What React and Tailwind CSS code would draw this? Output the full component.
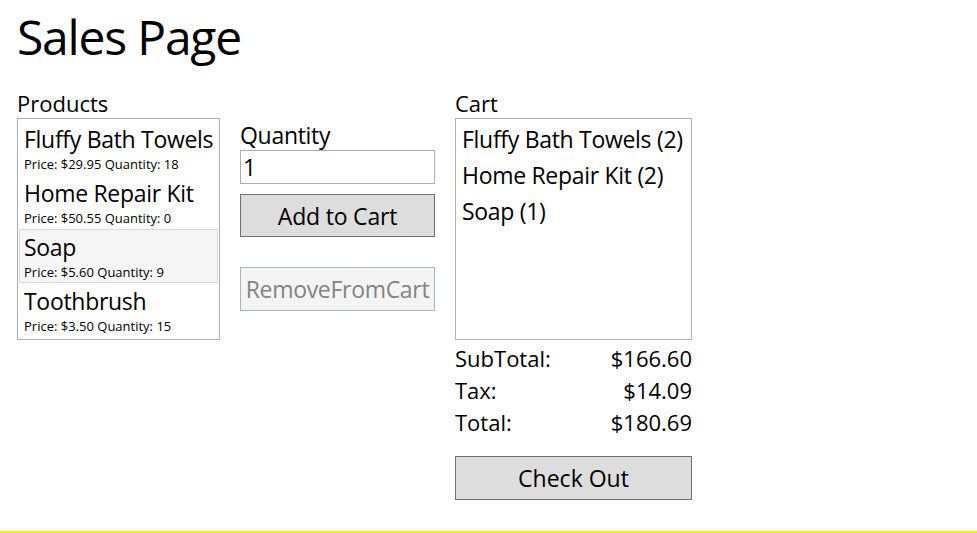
const products = [
    { name: 'Fluffy Bath Towels', price: '$29.95', qty: 18 },
    { name: 'Home Repair Kit', price: '$50.55', qty: 0 },
    { name: 'Soap', price: '$5.60', qty: 9, selected: true },
    { name: 'Toothbrush', price: '$3.50', qty: 15 },
];

const cart = ['Fluffy Bath Towels (2)', 'Home Repair Kit (2)', 'Soap (1)'];

const totals = [
    ['SubTotal:', '$166.60'],
    ['Tax:', '$14.09'],
    ['Total:', '$180.69'],
];

export default function App() {
    return (
        <div
            className="h-[533px] w-full bg-white text-black border-b-2 border-[#fff200] overflow-hidden"
            style={{ fontFamily: '"Segoe UI", "Open Sans", sans-serif' }}
        >
            <div className="pl-[17px] pt-[5px]">
                <h1 className="text-[48px] leading-[64px] font-normal tracking-[-1.2px]">Sales Page</h1>

                <div className="flex mt-[20px]">
                    {/* Products */}
                    <div className="w-[203px]">
                        <div className="text-[22px] leading-[29px]">Products</div>
                        <div className="h-[222px] border border-[#abadb3] px-px pt-[2px]">
                            {products.map((p) => (
                                <div
                                    key={p.name}
                                    className={
                                        p.selected
                                            ? 'px-[4px] py-px border border-[#dadada] bg-[#f6f6f6]'
                                            : 'px-[4px] py-px border border-transparent'
                                    }
                                >
                                    <div className="text-[23px] leading-[32px] tracking-[-0.3px] whitespace-nowrap">{p.name}</div>
                                    <div className="text-[13px] leading-[18px] whitespace-nowrap">
                                        Price: {p.price} Quantity: {p.qty}
                                    </div>
                                </div>
                            ))}
                        </div>
                    </div>

                    {/* Quantity + actions */}
                    <div className="w-[195px] ml-[20px] pt-[32px]">
                        <div className="text-[23px] leading-[29px] tracking-[-0.3px]">Quantity</div>
                        <div className="h-[34px] border border-[#abadb3] px-[2px] text-[23px] leading-[32px]">1</div>
                        <button className="mt-[10px] w-full h-[43px] border border-[#707070] bg-[#dddddd] text-[23px] leading-[32px] tracking-[-0.2px]">
                            Add to Cart
                        </button>
                        <button
                            disabled
                            className="mt-[30px] w-full h-[44px] border border-[#adb2b5] bg-[#f4f4f4] text-[#838383] text-[23px] leading-[32px] tracking-[-0.3px]"
                        >
                            RemoveFromCart
                        </button>
                    </div>

                    {/* Cart */}
                    <div className="w-[237px] ml-[20px]">
                        <div className="text-[22px] leading-[29px]">Cart</div>
                        <div className="h-[222px] border border-[#abadb3] px-px pt-[2px]">
                            {cart.map((c) => (
                                <div
                                    key={c}
                                    className="px-[4px] py-px border border-transparent text-[23px] leading-[32px] tracking-[-0.3px] whitespace-nowrap"
                                >
                                    {c}
                                </div>
                            ))}
                        </div>
                        <div className="mt-[2px]">
                            {totals.map(([label, value]) => (
                                <div key={label} className="flex justify-between text-[22px] leading-[32px]">
                                    <span>{label}</span>
                                    <span>{value}</span>
                                </div>
                            ))}
                        </div>
                        <button className="mt-[18px] w-full h-[44px] border border-[#707070] bg-[#dddddd] text-[23px] leading-[32px]">
                            Check Out
                        </button>
                    </div>
                </div>
            </div>
        </div>
    );
}
